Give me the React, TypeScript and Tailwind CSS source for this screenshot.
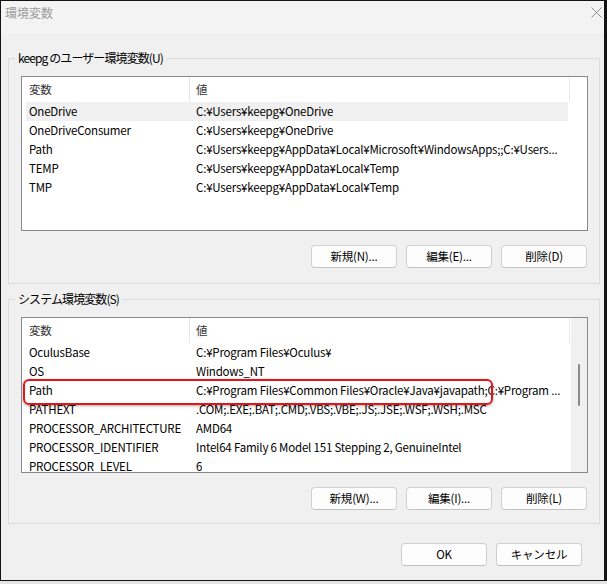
import React from 'react';

type Row = { name: string; value: string; selected?: boolean };

const userVars: Row[] = [
  { name: 'OneDrive', value: 'C:¥Users¥keepg¥OneDrive', selected: true },
  { name: 'OneDriveConsumer', value: 'C:¥Users¥keepg¥OneDrive' },
  { name: 'Path', value: 'C:¥Users¥keepg¥AppData¥Local¥Microsoft¥WindowsApps;;C:¥Users...' },
  { name: 'TEMP', value: 'C:¥Users¥keepg¥AppData¥Local¥Temp' },
  { name: 'TMP', value: 'C:¥Users¥keepg¥AppData¥Local¥Temp' },
];

const systemVars: Row[] = [
  { name: 'OculusBase', value: 'C:¥Program Files¥Oculus¥' },
  { name: 'OS', value: 'Windows_NT' },
  { name: 'Path', value: 'C:¥Program Files¥Common Files¥Oracle¥Java¥javapath;C:¥Program ...' },
  { name: 'PATHEXT', value: '.COM;.EXE;.BAT;.CMD;.VBS;.VBE;.JS;.JSE;.WSF;.WSH;.MSC' },
  { name: 'PROCESSOR_ARCHITECTURE', value: 'AMD64' },
  { name: 'PROCESSOR_IDENTIFIER', value: 'Intel64 Family 6 Model 151 Stepping 2, GenuineIntel' },
  { name: 'PROCESSOR_LEVEL', value: '6' },
];

function Button({ label }: { label: string }) {
  return (
    <button className="h-[23px] w-[86px] rounded-[4px] border border-[#d0d0d0] border-b-[#c4c4c4] bg-[#fdfdfd] leading-none text-black">
      {label}
    </button>
  );
}

function VarList({ rows, scroll, highlight }: { rows: Row[]; scroll?: boolean; highlight?: boolean }) {
  return (
    <div className="relative flex h-full overflow-hidden border border-[#868a90] bg-white">
      <div className="flex w-[548px] flex-col overflow-hidden">
        <div className="flex h-[25px] shrink-0 items-center border-r border-[#e8e8e8] text-[#333]">
          <div className="flex h-full w-[168px] items-center border-r border-[#e6e6e6] pl-[7px]">変数</div>
          <div className="pl-[6px]">値</div>
        </div>
        {rows.map((r) => (
          <div
            key={r.name}
            className={`ml-[4px] mr-[2px] flex h-[19px] shrink-0 items-center whitespace-nowrap ${r.selected ? 'bg-[#f0f0f0]' : ''}`}
          >
            <div className="w-[170px] shrink-0 pl-[3px]">{r.name}</div>
            <div className="overflow-hidden">{r.value}</div>
          </div>
        ))}
      </div>
      <div className={`ml-[1px] flex-1 ${scroll ? 'bg-[#f0f0f0]' : ''}`}>
        {scroll && <div className="ml-[7px] mt-[46px] h-[42px] w-[2px] rounded-full bg-[#8b8b8b]" />}
      </div>
      {highlight && (
        <div className="absolute left-[1px] top-[61px] h-[26px] w-[470px] rounded-[6px] border-2 border-[#e5141b] shadow-[0_1px_3px_rgba(0,0,0,0.35)]" />
      )}
    </div>
  );
}

function Group({ title, children }: { title: string; children: React.ReactNode }) {
  return (
    <fieldset className="ml-[7px] mr-[4px] border border-[#dcdcdc] pl-[12px] pr-[11px]">
      <legend className="ml-[-6px] px-[3px] text-[12px] leading-[16px] tracking-[-0.9px] text-black">{title}</legend>
      {children}
    </fieldset>
  );
}

export default function App() {
  return (
    <div className="h-[584px] w-[607px] bg-[#e4e4e4] font-['Noto_Sans_CJK_JP',sans-serif] text-[11.5px] tracking-[-0.2px] text-black">
      <div className="flex h-[581px] flex-col border-b border-l border-r-[3px] border-t border-[#141414] bg-[#f0f0f0]">
        <div className="flex h-[33px] shrink-0 items-start justify-between bg-[#f3f3f3] pl-[4px] pr-[2px] pt-[4px]">
          <span className="text-[12px] leading-[16px] tracking-normal text-[#9c9c9c]">環境変数</span>
          <svg width="11" height="11" viewBox="0 0 11 11" className="mt-[2px]">
            <path d="M0.5 0.5 L10.5 10.5 M10.5 0.5 L0.5 10.5" stroke="#8c8c8c" strokeWidth="1" fill="none" />
          </svg>
        </div>

        <div className="mt-[16px]">
          <Group title="keepg のユーザー環境変数(U)">
            <div className="h-[165px] pt-[10px]">
              <VarList rows={userVars} />
            </div>
            <div className="mt-[14px] flex justify-end gap-[9px] pb-[15px] pr-[1px]">
              <Button label="新規(N)..." />
              <Button label="編集(E)..." />
              <Button label="削除(D)" />
            </div>
          </Group>
        </div>

        <div className="mt-[7px]">
          <Group title="システム環境変数(S)">
            <div className="h-[166px] pt-[10px]">
              <VarList rows={systemVars} scroll highlight />
            </div>
            <div className="mt-[14px] flex justify-end gap-[9px] pb-[13px] pr-[1px]">
              <Button label="新規(W)..." />
              <Button label="編集(I)..." />
              <Button label="削除(L)" />
            </div>
          </Group>
        </div>

        <div className="mr-[22px] mt-[19px] flex justify-end gap-[9px]">
          <Button label="OK" />
          <Button label="キャンセル" />
        </div>
      </div>
    </div>
  );
}
